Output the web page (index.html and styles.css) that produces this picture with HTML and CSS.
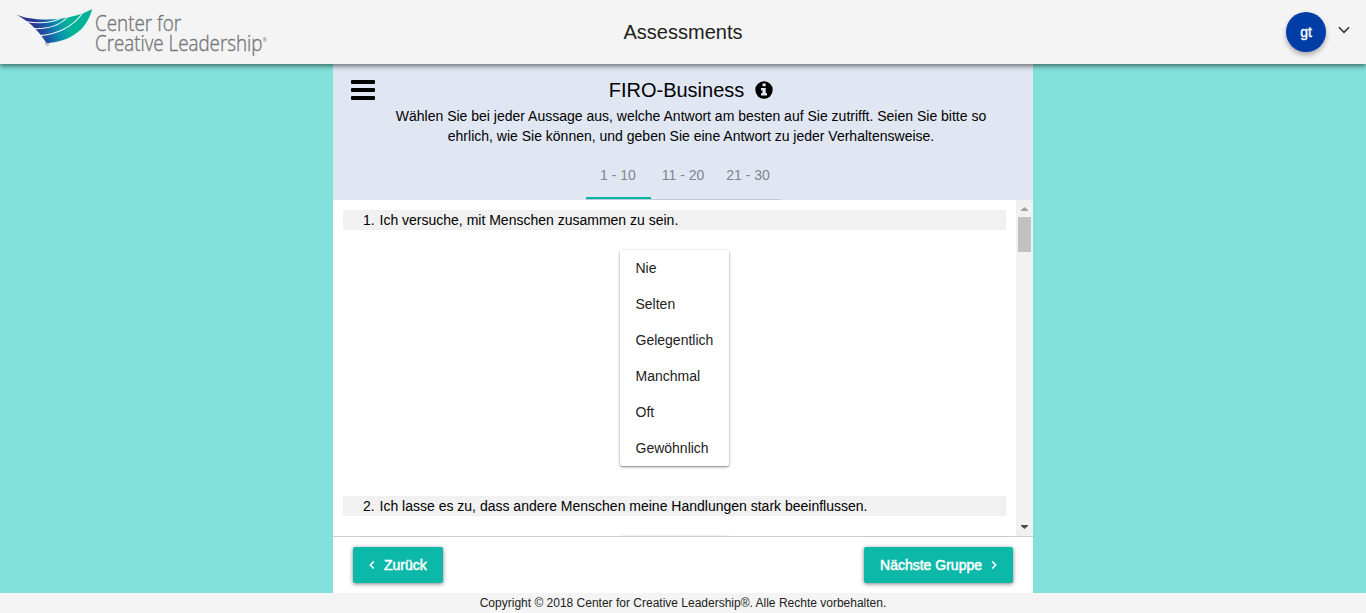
FILE: index.html
```
<!DOCTYPE html>
<html lang="de">
<head>
<meta charset="utf-8">
<title>Assessments</title>
<link rel="stylesheet" href="styles.css">
</head>
<body>
<header class="topbar">
  <svg class="logo" width="270" height="64" viewBox="0 0 270 64" role="img" aria-label="Center for Creative Leadership">
    <defs>
      <linearGradient id="wing" gradientUnits="userSpaceOnUse" x1="36" y1="32" x2="68" y2="22">
        <stop offset="0" stop-color="#2b3592"/>
        <stop offset=".3" stop-color="#1a58a4"/>
        <stop offset=".65" stop-color="#0a90b0"/>
        <stop offset="1" stop-color="#00b398"/>
      </linearGradient>
    </defs>
    <path fill="url(#wing)" d="M16.500 14.700C27 19 43 20.500 60 18.800C72 17.300 83 14 92.300 9C89 20 84 28 76 33.500C67 40 57 42.500 46.500 43.200C42 36 37 30 31 24.500C27 21 22 17.500 16.500 14.700Z"/>
    <g class="feathers">
      <path d="M25.500 21.500C37 23.500 49 23.500 60 18.800"/>
      <path d="M33 28.700C47 29 60 25.500 67.500 17"/>
      <path d="M39 35.600C56 35 73 27 83 12.500"/>
    </g>
    <text class="tm" x="44.500" y="46">TM</text>
    <g class="wordmark">
      <text x="95" y="31" textLength="86" lengthAdjust="spacingAndGlyphs">Center for</text>
      <text x="95" y="51" textLength="167.500" lengthAdjust="spacingAndGlyphs">Creative Leadership</text>
    </g>
    <text class="reg" x="262.500" y="42">®</text>
  </svg>
  <h1 class="page-title">Assessments</h1>
  <div class="account">
    <span class="avatar">gt</span>
    <svg class="caret" width="12" height="8" viewBox="0 0 12 8"><path d="M1 1.300L6 6.300L11 1.300"/></svg>
  </div>
</header>
<main class="panel">
  <section class="intro">
    <svg class="burger" width="24" height="20" viewBox="0 0 24 20"><rect width="24" height="4" rx="1"/><rect y="8" width="24" height="4" rx="1"/><rect y="16" width="24" height="4" rx="1"/></svg>
    <div class="intro-body">
      <h2 class="survey-title">FIRO-Business
        <svg class="info" width="18" height="18" viewBox="0 0 18 18"><circle cx="9" cy="9" r="8.700"/><path d="M7.500 2.500h3.200v2.700H7.500zM6 7h4.700v5.300H12v2.200H6v-2.200h1.400V9.200H6z"/></svg>
      </h2>
      <p class="hint">Wählen Sie bei jeder Aussage aus, welche Antwort am besten auf Sie zutrifft. Seien Sie bitte so<br>ehrlich, wie Sie können, und geben Sie eine Antwort zu jeder Verhaltensweise.</p>
    </div>
    <nav class="tabs"><a class="tab active">1 - 10</a><a class="tab">11 - 20</a><a class="tab">21 - 30</a></nav>
  </section>
  <section class="questions">
    <div class="list">
      <div class="question"><span class="num">1.</span>Ich versuche, mit Menschen zusammen zu sein.</div>
      <ul class="options"><li>Nie</li><li>Selten</li><li>Gelegentlich</li><li>Manchmal</li><li>Oft</li><li>Gewöhnlich</li></ul>
      <div class="question"><span class="num">2.</span>Ich lasse es zu, dass andere Menschen meine Handlungen stark beeinflussen.</div>
      <ul class="options next"></ul>
    </div>
    <div class="scrollbar">
      <svg width="17" height="17" viewBox="0 0 17 17"><path fill="#a3a3a3" d="M5 11h7v-1L8.500 7L5 10z"/></svg>
      <div class="thumb"></div>
      <svg class="down" width="17" height="17" viewBox="0 0 17 17"><path fill="#505050" d="M5 6h7v1L8.500 10L5 7z"/></svg>
    </div>
  </section>
  <div class="actions">
    <button class="btn back"><svg width="6" height="8" viewBox="0 0 6 8"><path d="M4.800 .5L1.300 4L4.800 7.500"/></svg><span>Zurück</span></button>
    <button class="btn forward"><span>Nächste Gruppe</span><svg width="6" height="8" viewBox="0 0 6 8"><path d="M1.200 .5L4.700 4L1.200 7.500"/></svg></button>
  </div>
</main>
<footer class="footer">Copyright © 2018 Center for Creative Leadership®. Alle Rechte vorbehalten.</footer>
</body>
</html>
```
FILE: styles.css
```
* { box-sizing: border-box; }
body {
  margin: 0;
  height: 613px;
  display: flex;
  flex-direction: column;
  overflow: hidden;
  background: #82e2db;
  color: #000;
  font: 14px/20px "Liberation Sans", Arial, sans-serif;
}
h1, h2, p, ul { margin: 0; padding: 0; font-weight: 400; }
svg { display: block; flex: none; }

.topbar {
  height: 64px;
  flex: none;
  display: grid;
  grid-template-columns: 1fr auto 1fr;
  align-items: center;
  background: #f4f4f4;
  box-shadow: 0 2px 5px rgba(0, 0, 0, .55);
  position: relative;
  z-index: 1;
}
.feathers { fill: none; stroke: #f4f4f4; stroke-width: 1.1; }
.wordmark { font: 300 22px "Open Sans", sans-serif; fill: #74797c; stroke: #74797c; stroke-width: .4; }
.tm { font: 3px "Open Sans", sans-serif; fill: #777; }
.reg { font: 5px "Open Sans", sans-serif; fill: #777; }
.page-title { font-size: 20px; line-height: 24px; color: #212121; }
.account { justify-self: end; display: flex; align-items: center; gap: 12px; padding-right: 16px; }
.avatar {
  width: 40px;
  height: 40px;
  border-radius: 50%;
  background: #003da6;
  color: #fff;
  font-size: 14px;
  line-height: 40px;
  -webkit-text-stroke: .4px #fff;
  text-align: center;
  box-shadow: 0 3px 5px rgba(0, 0, 0, .3);
}
.caret { margin-bottom: 4px; fill: none; stroke: #333; stroke-width: 1.6; }

.panel { width: 700px; flex: 1; margin: 0 auto; display: flex; flex-direction: column; background: #fff; }
.intro {
  height: 136px;
  flex: none;
  padding: 14px 18px 0;
  display: grid;
  grid-template-columns: 24px 1fr;
  background: #e0e7f3;
}
.burger { margin-top: 2px; }
.intro-body { text-align: center; padding-right: 8px; }
.survey-title { display: flex; justify-content: center; align-items: center; gap: 11px; font-size: 20px; line-height: 24px; height: 28px; padding-bottom: 4px; }
.info circle { fill: #000; }
.info path { fill: #e0e7f3; }
.tabs { grid-column: 1 / -1; justify-self: center; display: flex; width: 195px; height: 49px; align-self: end; box-shadow: inset 0 -1px #c3c9d4; }
.tab { width: 65px; height: 49px; line-height: 49px; text-align: center; color: #7f848c; }
.tab.active { height: 48px; border-bottom: 2px solid #00b8a5; }

.questions { height: 336px; flex: none; display: flex; }
.list { flex: 1; padding: 10px; overflow: hidden; }
.question { height: 20px; padding-left: 20px; background: #f1f1f1; white-space: nowrap; }
.num { display: inline-block; width: 16.500px; }
.options {
  width: 109px;
  margin: 20px auto 30px;
  list-style: none;
  border-radius: 2px;
  background: #fff;
  color: #212121;
  line-height: 36px;
  box-shadow: 0 1px 3px rgba(0, 0, 0, .4), 0 1px 1px rgba(0, 0, 0, .15);
}
.options li { height: 36px; padding-left: 15.500px; }
.options.next { height: 216px; }
.scrollbar { width: 17px; display: flex; flex-direction: column; background: #f1f1f1; }
.thumb { width: 13px; height: 35px; margin: 0 auto; background: #c1c1c1; }
.down { margin-top: auto; }

.actions { flex: 1; display: flex; justify-content: space-between; padding: 10px 20px; border-top: 1px solid #ccc; }
.btn {
  height: 36px;
  display: flex;
  align-items: center;
  border: 0;
  border-radius: 2px;
  padding: 0 16px;
  gap: 9px;
  background: #0cb8a8;
  color: #fff;
  font: 400 14px/36px "Liberation Sans", Arial, sans-serif;
  -webkit-text-stroke: .5px #fff;
  box-shadow: 0 1px 4px rgba(0, 0, 0, .5);
}
.btn svg { fill: none; stroke: #fff; stroke-width: 1.6; }
.footer { height: 20px; flex: none; background: #f4f4f4; color: #212121; font-size: 12px; text-align: center; }
```
